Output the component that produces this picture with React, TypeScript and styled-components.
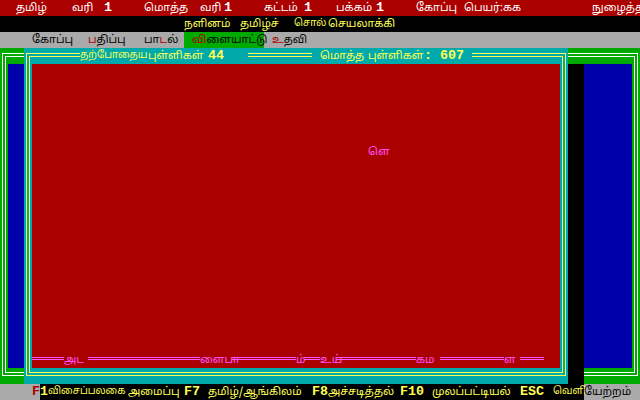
import React from "react";
import styled, { createGlobalStyle } from "styled-components";

const C = {
  red: "#AA0000",
  green: "#00AA00",
  cyan: "#00AAAA",
  blue: "#0000AA",
  gray: "#AAAAAA",
  yellow: "#FFFF55",
  white: "#FFFFFF",
  pink: "#FF55FF",
  black: "#000000",
};

const TAMIL = `"Noto Sans Tamil", "Lohit Tamil", "Noto Sans", "DejaVu Sans", sans-serif`;
const MONO = `"Liberation Mono", "DejaVu Sans Mono", monospace`;

const Global = createGlobalStyle`
  html, body { margin: 0; padding: 0; background: #000; }
  body { width: 640px; height: 400px; overflow: hidden; font-family: ${TAMIL}; }
`;

const Screen = styled.div`
  width: 640px;
  height: 400px;
  display: flex;
  flex-direction: column;
  overflow: hidden;
`;

const Bar = styled.div<{ $bg: string; $fg: string }>`
  height: 16px;
  flex: none;
  display: flex;
  background: ${(p) => p.$bg};
  color: ${(p) => p.$fg};
  font-size: 11px;
  white-space: nowrap;
  overflow: hidden;
`;

const Cell = styled.span<{ $w: number; $fg?: string; $bg?: string }>`
  flex: none;
  box-sizing: border-box;
  width: ${(p) => p.$w}px;
  height: 16px;
  line-height: 16px;
  display: flex;
  align-items: center;
  white-space: nowrap;
  overflow: visible;
  ${(p) => (p.$fg ? `color: ${p.$fg};` : "")}
  ${(p) => (p.$bg ? `background: ${p.$bg};` : "")}
`;

const Num = styled.b<{ $fg?: string }>`
  font-family: ${MONO};
  font-weight: bold;
  font-size: 13.33px;
  ${(p) => (p.$fg ? `color: ${p.$fg};` : "")}
`;

/* slightly condensed word for cells where the DOS glyphs were narrow */
const Tight = styled.span`
  font-size: 10px;
`;

const Hot = styled.span`
  color: ${C.red};
`;

type Seg = [number, React.ReactNode];

function Segs({ segs, end, fg }: { segs: Seg[]; end: number; fg?: string }) {
  return (
    <>
      {segs.map(([x, c], i) => {
        const next = i + 1 < segs.length ? segs[i + 1][0] : end;
        return (
          <Cell key={i} $w={next - x} $fg={fg}>
            {c}
          </Cell>
        );
      })}
    </>
  );
}

/* ---------- top rows ---------- */

const topSegs: Seg[] = [
  [0, null],
  [16, "தமிழ்"],
  [72, "வரி"],
  [104, <Num>1</Num>],
  [144, "மொத்த"],
  [200, "வரி"],
  [224, <Num>1</Num>],
  [264, "கட்டம்"],
  [304, <Num>1</Num>],
  [336, "பக்கம்"],
  [376, <Num>1</Num>],
  [416, "கோப்பு"],
  [464, "பெயர்:கக"],
  [592, "நுழைத்தல்"],
];

const titleSegs: Seg[] = [
  [0, null],
  [184, "நளினம்"],
  [240, "தமிழ்ச்"],
  [294, <Tight>சொல்</Tight>],
  [328, "செயலாக்கி"],
];

const MenuItem = styled.span<{ $w: number; $active?: boolean }>`
  flex: none;
  box-sizing: border-box;
  width: ${(p) => p.$w}px;
  height: 16px;
  display: flex;
  align-items: center;
  padding-left: 8px;
  white-space: nowrap;
  background: ${(p) => (p.$active ? C.green : "transparent")};
`;

/* ---------- windows ---------- */

const Desktop = styled.div`
  position: relative;
  height: 336px;
  flex: none;
`;

const Win = styled.div<{ $bg: string }>`
  box-sizing: border-box;
  height: 100%;
  padding: 5px 2px 8px 2px;
  background: ${(p) => p.$bg};
  display: flex;
`;

const FrontWin = styled(Win)`
  position: absolute;
  left: 24px;
  top: 0;
  width: 544px;
  height: 336px;
`;

const OuterLine = styled.div<{ $c: string }>`
  flex: 1;
  display: flex;
  border: 1px solid ${(p) => p.$c};
  padding: 2px;
`;

const InnerLine = styled.div<{ $c: string }>`
  flex: 1;
  display: flex;
  border: 1px solid ${(p) => p.$c};
  padding: 7px 2px 4px 2px;
`;

const Pane = styled.div<{ $bg: string }>`
  flex: 1;
  position: relative;
  display: flex;
  flex-direction: column;
  justify-content: flex-end;
  background: ${(p) => p.$bg};
`;

const Shadow = styled.div`
  position: absolute;
  left: 568px;
  top: 16px;
  width: 16px;
  height: 320px;
  background: ${C.black};
`;

const TitleLabel = styled.div<{ $left: number; $w: number }>`
  position: absolute;
  top: 0;
  left: ${(p) => p.$left}px;
  width: ${(p) => p.$w}px;
  height: 16px;
  display: flex;
  background: ${C.cyan};
  color: ${C.yellow};
  font-size: 11px;
  white-space: nowrap;
`;

const FloorRow = styled.div`
  height: 16px;
  flex: none;
  display: flex;
  color: ${C.pink};
  font-size: 11px;
`;

const Rail = styled.span<{ $w: number }>`
  flex: none;
  width: ${(p) => p.$w}px;
  height: 3px;
  box-sizing: border-box;
  margin-top: 5px;
  border-top: 1px solid ${C.pink};
  border-bottom: 1px solid ${C.pink};
`;

const Letter = styled.span<{ $w: number }>`
  flex: none;
  width: ${(p) => p.$w}px;
  height: 16px;
  display: flex;
  align-items: center;
  white-space: nowrap;
`;

const Falling = styled.span`
  position: absolute;
  left: 336px;
  top: 80px;
  height: 16px;
  display: flex;
  align-items: center;
  color: ${C.pink};
  font-size: 11px;
`;

/* ---------- status ---------- */

const ShadowStrip = styled.div`
  flex: none;
  width: 544px;
  height: 16px;
  display: flex;
  background: ${C.black};
  color: ${C.yellow};
`;

const statusSegs: Seg[] = [
  [40, <Num>1</Num>],
  [48, <Tight>விசைப்பலகை</Tight>],
  [128, "அமைப்பு"],
  [184, <Num>F7</Num>],
  [208, "தமிழ்/ஆங்கிலம்"],
  [312, <Num>F8</Num>],
  [328, "அச்சடித்தல்"],
  [400, <Num>F10</Num>],
  [432, "முலப்"],
  [464, "பட்டியல்"],
  [520, <Num>ESC</Num>],
  [553, <Tight>வெளி</Tight>],
];

export default function App() {
  return (
    <Screen>
      <Global />
      <Bar $bg={C.red} $fg={C.white}>
        <Segs segs={topSegs} end={640} />
      </Bar>
      <Bar $bg={C.black} $fg={C.yellow}>
        <Segs segs={titleSegs} end={640} />
      </Bar>
      <Bar $bg={C.gray} $fg={C.black}>
        <Cell $w={24} />
        <MenuItem $w={56}>கோப்பு</MenuItem>
        <MenuItem $w={56}>
          <Hot>ப</Hot>திப்பு
        </MenuItem>
        <MenuItem $w={48}>
          பா<Hot>ட</Hot>ல்
        </MenuItem>
        <MenuItem $w={80} $active>
          <Hot>வி</Hot>ளையாட்டு
        </MenuItem>
        <MenuItem $w={48}>
          <Hot>உ</Hot>தவி
        </MenuItem>
      </Bar>

      <Desktop>
        <Win $bg={C.green}>
          <OuterLine $c={C.white}>
            <InnerLine $c={C.white}>
              <Pane $bg={C.blue} />
            </InnerLine>
          </OuterLine>
        </Win>
        <Shadow />
        <FrontWin $bg={C.cyan}>
          <OuterLine $c={C.yellow}>
            <InnerLine $c={C.yellow}>
              <Pane $bg={C.red}>
                <Falling>ளெ</Falling>
                <FloorRow>
                  <Rail $w={32} />
                  <Letter $w={24}>அட</Letter>
                  <Rail $w={112} />
                  <Letter $w={32}>ளைபா</Letter>
                  <Rail $w={64} />
                  <Letter $w={8}>ம்</Letter>
                  <Rail $w={16} />
                  <Letter $w={16}>உய்</Letter>
                  <Rail $w={80} />
                  <Letter $w={24}>கம</Letter>
                  <Rail $w={64} />
                  <Letter $w={16}>ள</Letter>
                  <Rail $w={24} />
                </FloorRow>
              </Pane>
            </InnerLine>
          </OuterLine>
          <TitleLabel $left={56} $w={168}>
            <Segs
              segs={[
                [80, <Tight>தற்போதைய</Tight>],
                [148, "புள்ளிகள்"],
                [208, <Num>44</Num>],
              ]}
              end={248}
            />
          </TitleLabel>
          <TitleLabel $left={288} $w={160}>
            <Segs
              segs={[
                [312, null],
                [320, "மொத்த"],
                [368, "புள்ளிகள்"],
                [424, <Num>:</Num>],
                [440, <Num>607</Num>],
              ]}
              end={472}
            />
          </TitleLabel>
        </FrontWin>
      </Desktop>

      <Bar $bg={C.gray} $fg={C.black}>
        <Cell $w={32} />
        <Cell $w={8}>
          <Num $fg={C.red}>F</Num>
        </Cell>
        <ShadowStrip>
          <Segs segs={statusSegs} end={584} />
        </ShadowStrip>
        <Cell $w={56}>யேற்றம்</Cell>
      </Bar>
    </Screen>
  );
}
